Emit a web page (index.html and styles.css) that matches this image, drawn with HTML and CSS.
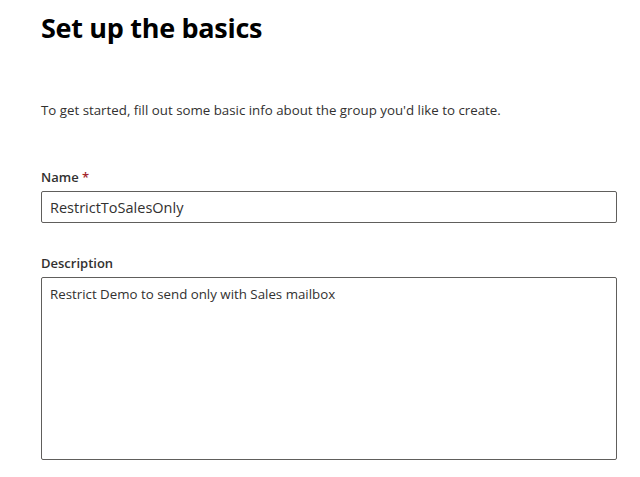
FILE: index.html
```html
<!DOCTYPE html>
<html>
<head>
    <title>Set up the basics</title>
    <link rel="stylesheet" href="styles.css">
</head>
<body>
    <div class="page">
        <h1>Set up the basics</h1>
        <p class="intro">To get started, fill out some basic info about the group you'd like to create.</p>

        <div class="form-group">
            <label for="name">Name <span class="req">*</span></label>
            <input type="text" id="name" value="RestrictToSalesOnly">
        </div>

        <div class="form-group">
            <label for="desc">Description</label>
            <textarea id="desc">Restrict Demo to send only with Sales mailbox</textarea>
        </div>
    </div>
</body>
</html>
```

FILE: styles.css
```css
body { margin: 0; font-family: "Open Sans", "Noto Sans", sans-serif; color: #323130; background: #fff; }
.page { padding: 10px 23px 0 41px; }
h1 { margin: 0; font-size: 27px; line-height: 36px; font-weight: 700; color: #000; letter-spacing: -0.3px; }
.intro { margin: 54px 0 0; font-size: 13.3px; line-height: 20px; }
.form-group { margin-top: 47px; }
.form-group + .form-group { margin-top: 30px; }
label { display: block; font-size: 13px; font-weight: 600; line-height: 20px; margin-bottom: 4px; }
.req { color: #a4262c; }
input, textarea { display: block; box-sizing: border-box; width: 100%; border: 1px solid #605e5c; border-radius: 2px; font-family: inherit; color: #323130; }
input { height: 32px; padding: 0 8px; font-size: 14.5px; }
textarea { height: 183px; padding: 7px 8px; font-size: 13.3px; resize: none; }
```
